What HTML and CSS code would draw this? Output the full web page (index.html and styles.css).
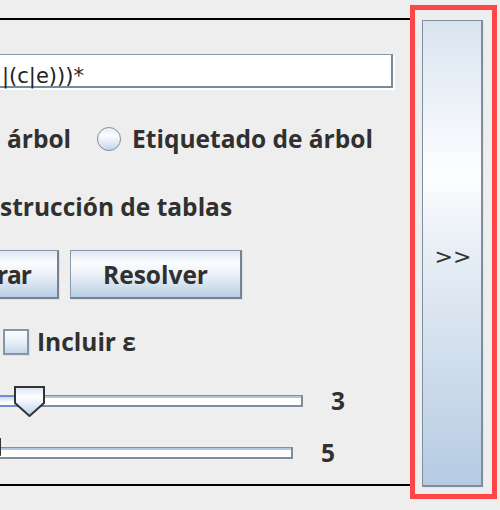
FILE: index.html
```html
<!DOCTYPE html>
<html lang="es">
<head>
<meta charset="utf-8">
<title>Expresiones regulares</title>
<link rel="stylesheet" href="styles.css">
</head>
<body>
<div class="app">
  <div class="panel">
    <div class="field">|(c|e)))*</div>
    <div class="opts">
      <span class="opt-text first-opt">árbol</span>
      <span class="radio"></span>
      <span class="opt-text">Etiquetado de árbol</span>
    </div>
    <div class="heading">strucción de tablas</div>
    <div class="buttons">
      <button class="btn btn-cut">rar</button>
      <button class="btn btn-solve">Resolver</button>
    </div>
    <div class="checkrow">
      <span class="check"></span>
      <span class="check-label">Incluir ε</span>
    </div>
    <div class="slider-row s1">
      <div class="slider">
        <div class="track"><div class="fill"></div><div class="rest"></div></div>
        <svg class="thumb" width="31" height="31" viewBox="0 0 31 31">
          <defs>
            <linearGradient id="tg1" x1="0" y1="0" x2="0" y2="1">
              <stop offset="0" stop-color="#d6e3f1"/>
              <stop offset="0.35" stop-color="#ffffff"/>
              <stop offset="1" stop-color="#b9d0ea"/>
            </linearGradient>
          </defs>
          <path d="M1 1H30V17L15.5 30L1 17Z" fill="url(#tg1)" stroke="#333" stroke-width="2" stroke-linejoin="miter"/>
        </svg>
      </div>
      <span class="val">3</span>
    </div>
    <div class="slider-row s2">
      <div class="slider">
        <div class="track"><div class="rest"></div></div>
        <svg class="thumb" width="31" height="31" viewBox="0 0 31 31">
          <path d="M1 1H30V17L15.5 30L1 17Z" fill="url(#tg1)" stroke="#333" stroke-width="2"/>
        </svg>
      </div>
      <span class="val">5</span>
    </div>
  </div>
  <div class="side">
    <button class="next">&gt;&gt;</button>
  </div>
</div>
</body>
</html>
```
FILE: styles.css
```css
* { box-sizing: border-box; }
html, body { margin: 0; padding: 0; }
body {
  width: 500px;
  height: 510px;
  overflow: hidden;
  background: #eeeeee;
  font-family: "Open Sans", "DejaVu Sans", sans-serif;
  font-weight: 700;
  font-size: 24.5px;
  color: #303030;
}
.app { display: flex; align-items: flex-start; }

.panel {
  width: 410px;
  height: 468px;
  margin-top: 18px;
  border-top: 2px solid #000;
  border-bottom: 2px solid #000;
  overflow: hidden;
  display: flex;
  flex-direction: column;
  flex: none;
}

.field {
  flex: none;
  margin-top: 34px;
  margin-left: -20px;
  width: 413px;
  height: 34px;
  background: #fff;
  border-top: 1px solid #8a97a4;
  border-right: 2px solid #7b8896;
  border-bottom: 2px solid #7b8896;
  box-shadow: 2px 2px 0 #fff;
  font-family: "DejaVu Sans", sans-serif;
  font-weight: 400;
  font-size: 21px;
  line-height: 23px;
  padding: 10px 0 0 22px;
  color: #222;
  white-space: nowrap;
}

.opts {
  flex: none;
  margin-top: 39px;
  height: 24px;
  display: flex;
  align-items: center;
  white-space: nowrap;
}
.opt-text { line-height: 24px; }
.first-opt { margin-left: 7px; }
.radio {
  flex: none;
  width: 24px;
  height: 24px;
  border-radius: 50%;
  border: 1.5px solid #7f8c99;
  background: linear-gradient(#e6edf5, #fbfcfe 35%, #c3d6ea);
  margin-left: 26px;
  margin-right: 11px;
}

.heading {
  flex: none;
  margin-top: 43px;
  line-height: 26px;
  height: 26px;
  white-space: nowrap;
}

.buttons {
  flex: none;
  margin-top: 30px;
  height: 49px;
  display: flex;
  gap: 11px;
}
.btn {
  flex: none;
  height: 49px;
  border-style: solid;
  border-width: 1px 2px 2px 1px;
  border-color: #8a98a7 #76838f #76838f #8a98a7;
  background: linear-gradient(#dde7f2, #fbfdff 25%, #edf2f8 50%, #b8cee6);
  box-shadow: 1px 1px 0 #d9e1ea;
  font: inherit;
  color: inherit;
  padding: 2px 0 0 0;
  line-height: 44px;
  white-space: nowrap;
}
.btn-cut {
  margin-left: -100px;
  width: 159px;
  text-align: right;
  padding-right: 26px;
  letter-spacing: -1px;
}
.btn-solve {
  width: 172px;
  text-align: center;
}

.checkrow {
  flex: none;
  margin-top: 30px;
  height: 26px;
  display: flex;
  align-items: center;
}
.check {
  flex: none;
  width: 26px;
  height: 26px;
  margin-left: 3px;
  border: 2px solid #8796a5;
  background: linear-gradient(#fbfcfe, #e8eff7 50%, #c6d7ea);
  box-shadow: 1px 1px 0 #dbe3ec;
}
.check-label { margin-left: 8px; line-height: 26px; white-space: nowrap; }

.slider-row {
  flex: none;
  height: 32px;
  display: flex;
  align-items: center;
}
.s1 { margin-top: 30px; }
.s2 { margin-top: 20px; }
.slider {
  position: relative;
  flex: none;
  height: 32px;
  margin-left: -20px;
  display: flex;
  align-items: center;
}
.s1 .slider { width: 323px; }
.s2 .slider { width: 313px; }
.track {
  width: 100%;
  height: 12px;
  display: flex;
}
.fill {
  flex: none;
  width: 49px;
  height: 12px;
  border-top: 2px solid #6d8fd3;
  border-bottom: 2px solid #6d8fd3;
  background: linear-gradient(#c9d8ea, #ffffff 70%);
}
.rest {
  flex: 1;
  height: 12px;
  background: #fff;
  border-top: 1px solid #8190a0;
  border-right: 2px solid #7f8d9b;
  border-bottom: 2px solid #7f8d9b;
  box-shadow: inset 0 2px 0 #b3c6da;
}
.thumb { position: absolute; top: 1px; }
.s1 .thumb { left: 34px; }
.s2 .thumb { left: -10px; }
.val { margin-left: 28px; line-height: 32px; }

.side {
  flex: none;
  margin-top: 5px;
  width: 87px;
  height: 494px;
  border: 5px solid #ff4545;
  padding: 10px 9px 7px 7px;
  background: #eeeeee;
}
.next {
  display: block;
  width: 100%;
  height: 100%;
  border-style: solid;
  border-width: 1px 2px 2px 1px;
  border-color: #7f8e9d;
  background: linear-gradient(#d9e4f0, #fdfeff 33%, #e6edf5 51%, #b5cbe3);
  box-shadow: 1px 1px 0 #dfe6ee;
  font-family: "DejaVu Sans", sans-serif;
  font-weight: 400;
  font-size: 22px;
  color: #333;
  padding: 6px 0 0 2px;
}
```
